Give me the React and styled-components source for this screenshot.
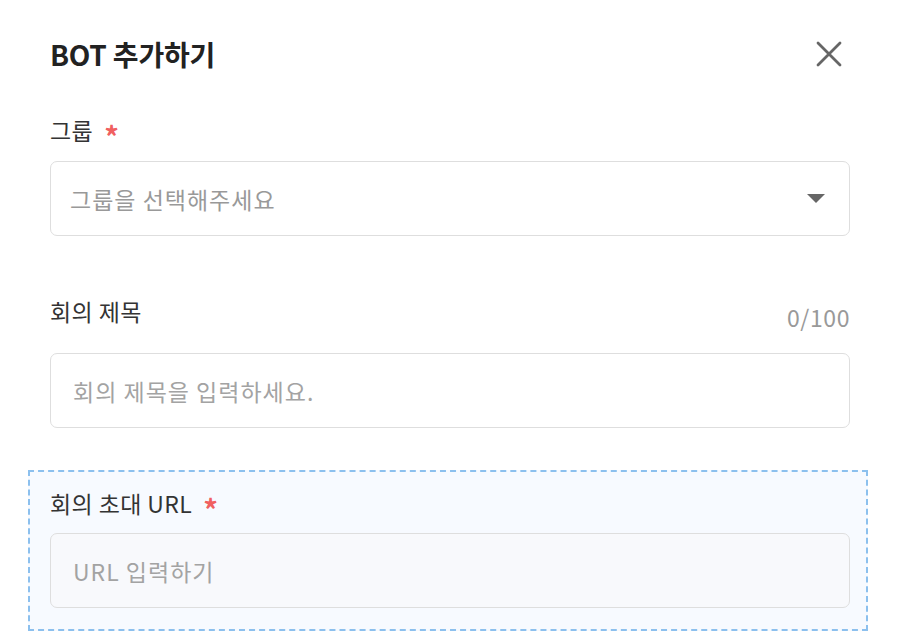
import styled, { createGlobalStyle } from "styled-components";

const GlobalStyle = createGlobalStyle`
  html, body {
    margin: 0;
    padding: 0;
    background: #ffffff;
  }
  body {
    font-family: "Noto Sans CJK KR", "Noto Sans", sans-serif;
    color: #333;
  }
  * {
    box-sizing: border-box;
  }
`;

const App = () => {
    return (
        <>
            <GlobalStyle />
            <Modal>
                <Header>
                    <Title>BOT 추가하기</Title>
                    <CloseButton aria-label="닫기">
                        <svg width="26" height="26" viewBox="0 0 26 26">
                            <path d="M2 2 L24 24 M24 2 L2 24" stroke="#666" strokeWidth="2.8" strokeLinecap="round" fill="none" />
                        </svg>
                    </CloseButton>
                </Header>

                <Field $top={37}>
                    <LabelRow>
                        <Label>그룹<Required>*</Required></Label>
                    </LabelRow>
                    <SelectBox>
                        <Placeholder>그룹을 선택해주세요</Placeholder>
                        <svg width="18" height="9" viewBox="0 0 18 9">
                            <path d="M0 0 H18 L9 9 Z" fill="#666" />
                        </svg>
                    </SelectBox>
                </Field>

                <Field $top={60}>
                    <LabelRow $gap={21}>
                        <Label>회의 제목</Label>
                        <Counter>0/100</Counter>
                    </LabelRow>
                    <TextInput placeholder="회의 제목을 입력하세요." />
                </Field>

                <DashedSection>
                    <LabelRow $gap={15}>
                        <Label>회의 초대 URL<Required>*</Required></Label>
                    </LabelRow>
                    <TextInput $tint placeholder="URL 입력하기" />
                </DashedSection>
            </Modal>
        </>
    );
}

const Modal = styled.div`
width: 900px;
height: 644px;
padding: 30px 50px 0 50px;
background: #fff;
overflow: hidden;
`;

const Header = styled.div`
display: flex;
align-items: center;
justify-content: space-between;
height: 48px;
`;

const Title = styled.h1`
margin: 0;
font-size: 28px;
font-weight: 700;
color: #222;
letter-spacing: -0.2px;
`;

const CloseButton = styled.button`
display: flex;
align-items: center;
justify-content: center;
width: 40px;
height: 40px;
margin-right: 1px;
padding: 0;
border: none;
background: none;
cursor: pointer;
`;

const Field = styled.div`
margin-top: ${(p) => p.$top}px;
`;

const LabelRow = styled.div`
display: flex;
align-items: flex-start;
justify-content: space-between;
margin-bottom: ${(p) => (p.$gap !== undefined ? p.$gap : 16)}px;
`;

const Label = styled.label`
display: flex;
align-items: center;
height: 30px;
font-size: 23px;
line-height: 30px;
letter-spacing: 0.4px;
color: #333;
`;

const Required = styled.span`
margin-left: 11px;
margin-top: 9px;
color: #f06060;
font-size: 29px;
font-weight: 700;
`;

const Counter = styled.span`
margin-top: 6px;
font-size: 23px;
line-height: 30px;
letter-spacing: 0.6px;
color: #999;
`;

const SelectBox = styled.div`
display: flex;
align-items: center;
justify-content: space-between;
height: 75px;
padding: 0 24px 0 19px;
border: 1.5px solid #dedede;
border-radius: 7px;
background: #fff;
cursor: pointer;
`;

const Placeholder = styled.span`
font-size: 23px;
letter-spacing: 1px;
color: #999;
`;

const TextInput = styled.input`
display: block;
width: 100%;
height: 75px;
padding: 0 22px;
border: 1.5px solid #dedede;
border-radius: 7px;
background: ${(p) => (p.$tint ? "#f8f9fc" : "#fff")};
font-family: "Noto Sans CJK KR", "Noto Sans", sans-serif;
font-size: 23px;
letter-spacing: 1px;
color: #333;
outline: none;

&::placeholder {
    color: #a3a3a3;
}
`;

const DashedSection = styled.div`
margin: 42px -18px 0 -22px;
padding: 16px 16px 21px 20px;
border: 2px dashed #8cc0ee;
background: #f7faff;
`;

export default App;
